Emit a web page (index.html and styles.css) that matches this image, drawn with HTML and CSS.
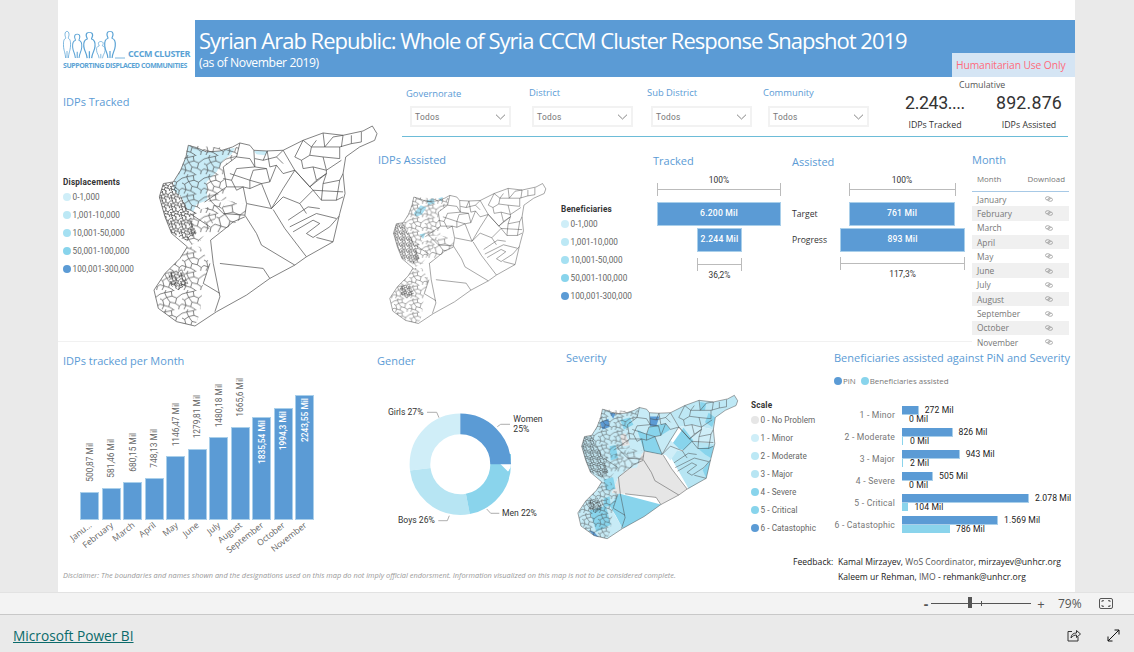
FILE: index.html
```html
<!DOCTYPE html>
<html lang="en">
<head>
<meta charset="utf-8">
<title>Whole of Syria CCCM Cluster Response Snapshot 2019</title>
<link rel="stylesheet" href="styles.css">
</head>
<body>
<svg class="defs" width="0" height="0" aria-hidden="true">
  <defs>
    <pattern id="mesh-med" width="66" height="58" patternUnits="userSpaceOnUse">
      <path class="mesh" d="M0 12L14 8L20 22L8 30L0 26M14 8L18 0M20 22L36 18L34 4L44 0M36 18L50 24L66 12M50 24L46 40L58 48L66 42M46 40L30 36L20 22M30 36L26 50L12 46L8 30M12 46L6 58M26 50L40 58M58 48L56 58M34 4L14 8M0 42L12 46"/>
    </pattern>
    <pattern id="mesh-large" width="66" height="58" patternUnits="userSpaceOnUse" patternTransform="scale(1.5)">
      <path class="mesh thin" d="M0 12L14 8L20 22L8 30L0 26M14 8L18 0M20 22L36 18L34 4L44 0M36 18L50 24L66 12M50 24L46 40L58 48L66 42M46 40L30 36L20 22M30 36L26 50L12 46L8 30M12 46L6 58M26 50L40 58M58 48L56 58M34 4L14 8M0 42L12 46"/>
    </pattern>
    <pattern id="mesh-dense" width="30" height="26" patternUnits="userSpaceOnUse">
      <path class="mesh heavy" d="M0 5L7 3L10 11L3 14L0 12M7 3L8 0M10 11L18 8L17 1L21 0M18 8L25 11L30 5M25 11L23 18L29 21L30 19M23 18L15 16L10 11M15 16L13 23L6 21L3 14M6 21L3 26M13 23L20 26M29 21L28 26M0 19L6 21"/>
    </pattern>
    <symbol id="syria" viewBox="300 365 700 625" preserveAspectRatio="none">
      <path class="mesh-area med" d="M415 435L555 445L570 428L560 470L520 500L530 600L465 605L440 640L412 640L370 545L392 510Z"/>
      <path class="mesh-area dense" d="M340 550L370 545L420 640L440 700L410 722L365 700L345 650L328 590Z"/>
      <path class="mesh-area med" d="M420 640L530 600L482 680L450 722L412 740L410 722Z"/>
      <path class="mesh-area large" d="M530 600L590 612L585 650L520 690L482 720L450 722L482 680Z"/>
      <path class="mesh-area med" d="M312 870L345 820L390 775L412 740L450 740L480 790L460 850L450 940L435 978L380 965L325 925Z"/>
      <path class="mesh-area dense" d="M355 820L395 805L415 850L385 870L360 855Z"/>
      <path class="lines" d="M570 428L560 470L520 500L530 560L580 560L590 610L665 625L700 565L735 510M612 450L615 500L560 505M652 452L660 500L680 495L700 520L735 510M700 450L735 510L790 570L880 575M760 420L785 440L780 465L755 480L760 505L790 500L830 510L875 480M820 398L825 440L785 440M825 440L870 440L870 475M880 405L875 440M935 395L935 425L905 430M735 510L780 560L830 520L830 510M635 550L665 625M700 590L750 610L790 570M790 570L815 600L860 600L880 590M715 660L775 620L810 625M720 680L800 640L860 655M730 695L790 660L810 670L770 700L790 712L840 680L868 648M800 712L850 725M465 605L530 560M590 612L585 645L620 700L635 735L735 795M670 628L705 685L770 770M510 790L640 805L660 835M490 790L510 890L495 935M480 790L460 850M585 650L550 665L520 690L482 720L490 790M480 600L520 640L585 645M540 520L600 540L635 550M600 540L600 565M680 495L660 545L635 550M460 850L510 880M420 640L480 680"/>
      <path class="lines" d="M560 470L600 475L615 500M560 505L545 540L560 570L580 560M545 540L520 535M600 540L610 510L650 505L660 545M615 500L650 505M652 452L640 480L615 475M580 560L600 565L635 550M640 480L680 470L700 490M680 470L700 450M785 440L800 420M825 440L850 410L880 405M905 430L905 405M870 440L905 430M780 465L820 470L830 510M820 470L870 475M755 480L735 470L760 420M790 500L800 540L830 520M800 540L780 560M815 600L820 550L830 520M860 600L870 540L880 520M820 550L870 540M700 590L665 625M750 610L770 640"/>
      <path class="outline" d="M415 435L440 442L470 455L510 452L548 440L570 428L600 435L612 450L650 452L700 450L760 420L820 398L880 405L940 392L968 377L982 400L975 420L930 440L888 470L880 520L886 580L870 640L850 725L770 770L735 795L660 835L590 885L500 935L435 978L380 965L325 925L312 870L345 820L390 775L412 740L365 700L345 650L328 590L340 550L370 545L392 510L408 470Z"/>
    </symbol>
    <g id="person">
      <path d="M2.6 29C2.2 23 .8 22 .5 17C.2 12 1 10 2.6 9.4C2.9 8.4 2 7.4 2 5.4C2 3.4 2.9 2.4 4 2.4C5.1 2.4 6 3.4 6 5.4C6 7.4 5.1 8.4 5.4 9.4C7 10 7.8 12 7.5 17C7.2 22 5.8 23 5.4 29M4 29V22"/>
    </g>
    <symbol id="link" viewBox="0 0 10 7">
      <ellipse cx="3.5" cy="2.7" rx="3" ry="2.1"/>
      <ellipse cx="6.5" cy="4.3" rx="3" ry="2.1"/>
    </symbol>
    <symbol id="chev" viewBox="0 0 11 6"><path d="M1 .7L5.5 5L10 .7"/></symbol>
  </defs>
</svg>

<main class="stage">
  <div class="canvas">
    <header class="header">
      <div class="logo">
        <svg class="logo-art" width="64" height="32" viewBox="0 0 64 32">
          <use href="#person"/>
          <use href="#person" transform="translate(9 3) scale(1.3 .9)"/>
          <use href="#person" transform="translate(20 1) scale(1.6 .97)"/>
          <use href="#person" transform="translate(33 11) scale(1.2 .63)"/>
          <use href="#person" transform="translate(41 0) scale(1.5 1)"/>
          <path d="M52 29H62"/>
        </svg>
        <span class="logo-name">CCCM CLUSTER</span>
        <span class="logo-tag">SUPPORTING DISPLACED COMMUNITIES</span>
      </div>
      <div class="banner">
        <h1>Syrian Arab Republic: Whole of Syria CCCM Cluster Response Snapshot 2019</h1>
        <p>(as of November 2019)</p>
        <span class="stamp">Humanitarian Use Only</span>
      </div>
    </header>

    <section class="upper">
      <div class="col-tracked">
        <h2 class="title t-tracked">IDPs Tracked</h2>
        <div class="map-row">
          <div class="legend l-disp">
            <h3>Displacements</h3>
            <div class="item"><i class="c1"></i>0-1,000</div>
            <div class="item"><i class="c2"></i>1,001-10,000</div>
            <div class="item"><i class="c3"></i>10,001-50,000</div>
            <div class="item"><i class="c4"></i>50,001-100,000</div>
            <div class="item"><i class="c5"></i>100,001-300,000</div>
          </div>
          <svg class="map map-a" viewBox="300 365 700 625">
            <path class="f1" d="M415 435L440 442L470 455L510 452L555 442L545 462L520 480L500 515L470 545L472 600L440 612L430 635L412 628L395 590L370 570L372 545L392 510L408 470Z"/>
            <path class="f1" d="M612 452L655 452L645 465L620 462Z"/>
            <use href="#syria" x="300" y="365" width="700" height="625"/>
          </svg>
        </div>
      </div>
      <div class="col-rest">
        <div class="filters">
          <div class="filter f-a"><label>Governorate</label><div class="select">Todos<svg class="chev"><use href="#chev"/></svg></div></div>
          <div class="filter f-b"><label>District</label><div class="select">Todos<svg class="chev"><use href="#chev"/></svg></div></div>
          <div class="filter f-c"><label>Sub District</label><div class="select">Todos<svg class="chev"><use href="#chev"/></svg></div></div>
          <div class="filter f-d"><label>Community</label><div class="select">Todos<svg class="chev"><use href="#chev"/></svg></div></div>
          <div class="kpis">
            <div class="cumulative">Cumulative</div>
            <div class="kpi-row">
              <div class="kpi k-one"><strong>2.243....</strong><span>IDPs Tracked</span></div>
              <div class="kpi k-two"><strong>892.876</strong><span>IDPs Assisted</span></div>
            </div>
          </div>
        </div>
        <div class="details">
          <div class="col-assisted">
            <h2 class="title">IDPs Assisted</h2>
            <div class="map-row2">
              <svg class="map map-b" viewBox="300 365 700 625">
                <path class="f2" d="M415 505L445 470L470 480L450 510L425 520Z"/>
                <path class="f2" d="M470 450L500 440L505 462L478 470Z"/>
                <path class="f2" d="M520 440L540 435L535 455Z"/>
                <path class="f2" d="M440 595L465 590L455 615Z"/>
                <use href="#syria" x="300" y="365" width="700" height="625"/>
              </svg>
              <div class="legend l-ben">
                <h3>Beneficiaries</h3>
                <div class="item"><i class="c1"></i>0-1,000</div>
                <div class="item"><i class="c2"></i>1,001-10,000</div>
                <div class="item"><i class="c3"></i>10,001-50,000</div>
                <div class="item"><i class="c4"></i>50,001-100,000</div>
                <div class="item"><i class="c5"></i>100,001-300,000</div>
              </div>
            </div>
          </div>

          <div class="col-bullet b-tracked">
            <h2 class="title">Tracked</h2>
            <div class="pct">100%</div>
            <div class="range r-full"></div>
            <div class="bar-fill b-full">6.200 Mil</div>
            <div class="bar-fill b-part">2.244 Mil</div>
            <div class="range r-part"></div>
            <div class="pct pct-low p-part">36,2%</div>
          </div>

          <div class="col-bullet b-assisted">
            <h2 class="title">Assisted</h2>
            <div class="pct p-target">100%</div>
            <div class="range r-target"></div>
            <div class="bar-row row-first"><span class="row-label w-target">Target</span><div class="bar-fill b-target">761 Mil</div></div>
            <div class="bar-row"><span class="row-label w-progress">Progress</span><div class="bar-fill b-progress">893 Mil</div></div>
            <div class="range r-progress"></div>
            <div class="pct pct-low p-progress">117,3%</div>
          </div>

          <div class="col-month">
            <h2 class="title">Month</h2>
            <div class="m-head"><span>Month</span><span>Download</span></div>
            <div class="m-row"><span>January</span><svg class="lnk"><use href="#link"/></svg></div>
            <div class="m-row"><span>February</span><svg class="lnk"><use href="#link"/></svg></div>
            <div class="m-row"><span>March</span><svg class="lnk"><use href="#link"/></svg></div>
            <div class="m-row"><span>April</span><svg class="lnk"><use href="#link"/></svg></div>
            <div class="m-row"><span>May</span><svg class="lnk"><use href="#link"/></svg></div>
            <div class="m-row"><span>June</span><svg class="lnk"><use href="#link"/></svg></div>
            <div class="m-row"><span>July</span><svg class="lnk"><use href="#link"/></svg></div>
            <div class="m-row"><span>August</span><svg class="lnk"><use href="#link"/></svg></div>
            <div class="m-row"><span>September</span><svg class="lnk"><use href="#link"/></svg></div>
            <div class="m-row"><span>October</span><svg class="lnk"><use href="#link"/></svg></div>
            <div class="m-row"><span>November</span><svg class="lnk"><use href="#link"/></svg></div>
          </div>
        </div>
      </div>
    </section>

    <div class="separator"></div>

    <section class="lower">
      <div class="col-chart">
        <h2 class="title">IDPs tracked per Month</h2>
        <div class="plot">
          <div class="bar-col"><span class="v-label">500,87 Mil</span><div class="vbar" style="height:28px"></div></div>
          <div class="bar-col"><span class="v-label">581,46 Mil</span><div class="vbar" style="height:32.5px"></div></div>
          <div class="bar-col"><span class="v-label">680,15 Mil</span><div class="vbar" style="height:38px"></div></div>
          <div class="bar-col"><span class="v-label">748,13 Mil</span><div class="vbar" style="height:42px"></div></div>
          <div class="bar-col"><span class="v-label">1146,47 Mil</span><div class="vbar" style="height:64px"></div></div>
          <div class="bar-col"><span class="v-label">1279,81 Mil</span><div class="vbar" style="height:71.5px"></div></div>
          <div class="bar-col"><span class="v-label">1480,18 Mil</span><div class="vbar" style="height:83px"></div></div>
          <div class="bar-col"><span class="v-label">1665,6 Mil</span><div class="vbar" style="height:93px"></div></div>
          <div class="bar-col"><div class="vbar" style="height:103px"><span class="v-label in">1835,54 Mil</span></div></div>
          <div class="bar-col"><div class="vbar" style="height:112px"><span class="v-label in">1994,3 Mil</span></div></div>
          <div class="bar-col"><div class="vbar" style="height:125px"><span class="v-label in">2243,55 Mil</span></div></div>
        </div>
        <div class="ticks">
          <div class="tick"><span>Janu...</span></div>
          <div class="tick"><span>February</span></div>
          <div class="tick"><span>March</span></div>
          <div class="tick"><span>April</span></div>
          <div class="tick"><span>May</span></div>
          <div class="tick"><span>June</span></div>
          <div class="tick"><span>July</span></div>
          <div class="tick"><span>August</span></div>
          <div class="tick"><span>September</span></div>
          <div class="tick"><span>October</span></div>
          <div class="tick"><span>November</span></div>
        </div>
      </div>

      <div class="col-gender">
        <h2 class="title">Gender</h2>
        <svg class="donut" width="189" height="145" viewBox="0 0 189 145">
          <g transform="rotate(-90 83.3 74.3)" fill="none" stroke-width="20.7">
            <circle class="s-girls" cx="83.3" cy="74.3" r="40.35" pathLength="100" stroke-dasharray="27 73" stroke-dashoffset="-73"/>
            <circle class="s-boys" cx="83.3" cy="74.3" r="40.35" pathLength="100" stroke-dasharray="26 74" stroke-dashoffset="-47"/>
            <circle class="s-men" cx="83.3" cy="74.3" r="40.35" pathLength="100" stroke-dasharray="22 78" stroke-dashoffset="-25"/>
            <circle class="s-women" cx="83.3" cy="74.3" r="40.35" pathLength="100" stroke-dasharray="25 75"/>
          </g>
          <path class="leader" d="M50 22.3H59.7L62 27.7M120.3 36.7L123.7 34.3H133M109.7 119L113.7 123.3H122.3M61.3 130.7H70.3L72.3 125.7"/>
          <text class="d-label" x="11" y="25">Girls 27%</text>
          <text class="d-label" x="136.3" y="32">Women</text>
          <text class="d-label" x="136.3" y="42">25%</text>
          <text class="d-label" x="125" y="126">Men 22%</text>
          <text class="d-label" x="21" y="133">Boys 26%</text>
        </svg>
      </div>

      <div class="col-severity">
        <h2 class="title">Severity</h2>
        <div class="map-row3">
          <svg class="map map-c" viewBox="300 365 700 625">
            <path class="f-base" d="M415 435L440 442L470 455L510 452L548 440L570 428L600 435L612 450L650 452L700 450L735 510L665 625L590 612L550 660L482 720L455 786L485 789L445 840L500 935L435 978L380 965L325 925L312 870L345 820L390 775L412 740L365 700L345 650L328 590L340 550L370 545L392 510L408 470Z"/>
            <path class="f-e" d="M700 450L760 420L820 398L880 405L940 392L968 377L982 400L975 420L930 440L888 470L880 520L830 510L790 500L735 510Z"/>
            <path class="f-m" d="M735 510L790 500L830 510L880 520L886 580L790 570Z"/>
            <path class="f-d" d="M681 600L750 610L790 570L886 580L870 640L850 725L776 769Z"/>
            <path class="f-c" d="M722 560L755 513L796 566L755 606L695 599Z"/>
            <path class="f-c" d="M815 600L880 590L870 640L845 625Z"/>
            <path class="f-c" d="M835 690L868 648L850 725Z"/>
            <path class="f-c" d="M860 450L888 470L875 510L845 490Z"/>
            <path class="f-c" d="M825 405L850 410L845 440L825 440Z"/>
            <path class="f-c" d="M560 520L600 540L635 550L665 625L590 612Z"/>
            <path class="f-c" d="M615 505L680 495L700 520L660 545L635 550L600 540Z"/>
            <path class="f-m" d="M665 625L700 565L735 600L700 650L681 628Z"/>
            <path class="f-x" d="M614 466L654 466L641 506L614 506Z"/>
            <path class="f-g" d="M485 789L510 790L640 805L660 835L735 795L770 770L705 685L670 628L590 612L550 660L482 720L455 786Z"/>
            <path class="f-c" d="M485 789L660 835L590 885L500 935L470 880L445 840Z"/>
            <path class="f-g" d="M490 545L510 535L530 585L500 590Z"/>
            <path class="f-c" d="M445 590L470 585L480 640L450 650Z"/>
            <path class="f-m" d="M480 640L580 620L560 680L490 690Z"/>
            <path class="f-c" d="M420 730L460 720L470 770L430 775Z"/>
            <path class="f-c" d="M360 860L430 840L450 920L390 950Z"/>
            <path class="f-x" d="M405 490L440 475L445 510L415 520Z"/>
            <path class="f-x" d="M445 450L470 452L460 475Z"/>
            <path class="f-x" d="M358 942L380 950L400 972L378 965Z"/>
            <path class="f-c" d="M490 480L530 470L545 500L505 520Z"/>
            <path class="f-c" d="M420 810L445 800L450 840L420 845Z"/>
            <use href="#syria" x="300" y="365" width="700" height="625"/>
          </svg>
          <div class="legend l-scale">
            <h3>Scale</h3>
            <div class="item"><i class="c0"></i>0 - No Problem</div>
            <div class="item"><i class="c1"></i>1 - Minor</div>
            <div class="item"><i class="c2"></i>2 - Moderate</div>
            <div class="item"><i class="c2b"></i>3 - Major</div>
            <div class="item"><i class="c4"></i>4 - Severe</div>
            <div class="item"><i class="c4"></i>5 - Critical</div>
            <div class="item"><i class="c5"></i>6 - Catastophic</div>
          </div>
        </div>
      </div>

      <div class="col-benef">
        <h2 class="title">Beneficiaries assisted against PiN and Severity</h2>
        <div class="b-legend">
          <i class="c5"></i><span>PiN</span><i class="c4"></i><span>Beneficiaries assisted</span>
        </div>
        <div class="b-rows">
          <div class="b-row"><span class="cat">1 - Minor</span><div class="pair"><div class="hb"><b class="pin" style="width:16.7px"></b><em>272 Mil</em></div><div class="hb"><b class="ass" style="width:0"></b><em class="zero">0 Mil</em></div></div></div>
          <div class="b-row"><span class="cat">2 - Moderate</span><div class="pair"><div class="hb"><b class="pin" style="width:50.5px"></b><em>826 Mil</em></div><div class="hb"><b class="ass" style="width:1px"></b><em class="zero">0 Mil</em></div></div></div>
          <div class="b-row"><span class="cat">3 - Major</span><div class="pair"><div class="hb"><b class="pin" style="width:57.7px"></b><em>943 Mil</em></div><div class="hb"><b class="ass" style="width:1px"></b><em class="zero">2 Mil</em></div></div></div>
          <div class="b-row"><span class="cat">4 - Severe</span><div class="pair"><div class="hb"><b class="pin" style="width:31px"></b><em>505 Mil</em></div><div class="hb"><b class="ass" style="width:0"></b><em class="zero">0 Mil</em></div></div></div>
          <div class="b-row"><span class="cat">5 - Critical</span><div class="pair"><div class="hb"><b class="pin" style="width:127px"></b><em>2.078 Mil</em></div><div class="hb"><b class="ass" style="width:6.4px"></b><em>104 Mil</em></div></div></div>
          <div class="b-row"><span class="cat">6 - Catastophic</span><div class="pair"><div class="hb"><b class="pin" style="width:96px"></b><em>1.569 Mil</em></div><div class="hb"><b class="ass" style="width:48px"></b><em>786 Mil</em></div></div></div>
        </div>
      </div>
    </section>

    <footer class="foot">
      <p class="disclaimer">Disclaimer: The boundaries and names shown and the designations used on this map do not imply official endorsment. Information visualized on this map is not to be considered complete.</p>
      <div class="feedback">
        <span>Feedback:</span><span><b>Kamal Mirzayev</b>, <u>WoS Coordinator</u>, mirzayev@unhcr.org</span>
        <span></span><span><b>Kaleem ur Rehman</b>, <u>IMO</u> - rehmank@unhcr.org</span>
      </div>
    </footer>
  </div>
</main>

<div class="zoombar">
  <span class="minus">-</span>
  <div class="slider"><i class="thumb"></i><i class="mark"></i></div>
  <span class="plus">+</span>
  <span class="percent">79%</span>
  <svg class="fit" width="14" height="11" viewBox="0 0 14 11"><rect x=".5" y=".5" width="13" height="10" rx="1.5"/><path d="M3 4V2.7H5M9 2.7H11V4M11 7V8.3H9M5 8.3H3V7"/></svg>
</div>

<div class="pbi">
  <a class="pbi-link" href="#">Microsoft Power BI</a>
  <svg class="share" width="14" height="13" viewBox="0 0 14 13"><path d="M5 2.5H1V12H11V8M4 9C4 5.5 6.5 4 9.5 4V1.5L13.5 5L9.5 8.5V6C7.5 6 5.5 6.8 4 9Z"/></svg>
  <svg class="expand" width="13" height="13" viewBox="0 0 13 13"><path d="M1 12L12 1M7.5 1H12V5.5M1 7.5V12H5.5"/></svg>
</div>
</body>
</html>
```

FILE: styles.css
```css
* { box-sizing: border-box; }
html, body { margin: 0; padding: 0; }
body {
  width: 1134px; height: 652px; overflow: hidden;
  background: #eaeaea;
  font-family: "Open Sans", "Noto Sans", sans-serif;
  color: #666;
}
.defs { display: block; height: 0; }
h1, h2, h3, p { margin: 0; font-weight: 400; }

.stage { height: 592px; padding-left: 58px; }
.canvas { width: 1017px; height: 592px; background: #fff; }

/* header */
.header { display: flex; height: 78px; padding: 20px 0 0 4px; }
.logo { width: 133px; height: 57px; position: relative; color: #5ba3d5; flex: none; }
.logo-art { display: block; margin: 9px 0 0 1px; fill: none; stroke: #5ba3d5; stroke-width: .8; }
.logo-name, .logo-tag { position: absolute; white-space: nowrap; font-weight: 700; font-family: "Open Sans", sans-serif; }
.logo-name { left: 66px; top: 28px; font-size: 9px; line-height: 12px; letter-spacing: -.4px; }
.logo-tag { left: 1px; top: 41px; font-size: 7px; line-height: 10px; letter-spacing: -.43px; }
.banner { position: relative; flex: 1; height: 57px; background: #5b9bd5; color: #fff; padding: 5px 0 0 4px; }
.banner h1 { font-size: 22px; line-height: 30px; letter-spacing: -.98px; white-space: nowrap; }
.banner p { font-size: 12.2px; line-height: 16px; margin-top: 0; letter-spacing: -.42px; }
.stamp {
  position: absolute; right: 0; bottom: 0; width: 123px; height: 24px;
  background: #d5e5f4; color: #ff6b7c; font-size: 10.3px; line-height: 25px; letter-spacing: -.12px;
  padding-left: 4px; white-space: nowrap;
}

/* shared */
.title { font-size: 11px; line-height: 16px; color: #5b9bd5; white-space: nowrap; }
.legend { font-family: Roboto, sans-serif; font-size: 8.2px; letter-spacing: .05px; color: #666; }
.legend h3 { font-size: 8.2px; line-height: 12px; font-weight: 700; color: #333; letter-spacing: .2px; }
.item { display: flex; align-items: center; height: 18px; white-space: nowrap; }
.item i { width: 8px; height: 8px; border-radius: 50%; margin-right: 1.5px; flex: none; }
.c0 { background: #e6e6e6; } .c1 { background: #cfeef8; } .c2 { background: #bce8f5; }
.c2b { background: #b7e5f3; } .c3 { background: #a5e0f2; } .c4 { background: #88d4ec; } .c5 { background: #5b9bd5; }
.map { display: block; flex: none; }
.mesh { fill: none; stroke: #444; stroke-width: 2; }
.mesh.thin { stroke-width: 1.4; }
.mesh.heavy { stroke: #333; stroke-width: 2.2; }
.mesh-area { stroke: none; }
.mesh-area.med { fill: url(#mesh-med); }
.mesh-area.large { fill: url(#mesh-large); }
.mesh-area.dense { fill: url(#mesh-dense); }
.lines { fill: none; stroke: #444; stroke-width: 2; }
.outline { fill: none; stroke: #555; stroke-width: 2.2; }
.f1 { fill: #c9ecf7; } .f2 { fill: #a9e0f2; }
.f-base { fill: #c7ebf6; } .f-e { fill: #bee8f5; } .f-m { fill: #cfeef8; } .f-d { fill: #b7e5f3; }
.f-c { fill: #88d4ec; } .f-x { fill: #5b9bd5; } .f-g { fill: #e6e6e6; }

/* upper */
.upper { display: flex; height: 263px; }
.col-tracked { width: 320px; flex: none; }
.t-tracked { margin: 16px 0 0 5px; }
.map-row { display: flex; margin-top: 12px; padding-left: 5px; }
.l-disp { width: 87px; flex: none; margin-top: 54px; }
.map-a { width: 233px; height: 208px; margin-left: 0; }
.col-rest { flex: 1; min-width: 0; }
.filters { display: flex; height: 59px; margin: 0 7px 0 24px; border-bottom: 1px solid #6dbcd8; padding-left: 4px; }
.filter { padding-top: 8px; font-size: 9.4px; flex: none; }
.filter label { display: block; line-height: 13px; color: #5b9bd5; white-space: nowrap; }
.f-a { width: 123px; padding-top: 9px; } .f-b { width: 118px; } .f-c { width: 116px; } .f-d { width: 132px; }
.select {
  display: flex; align-items: center; justify-content: space-between;
  width: 101px; height: 21px; margin: 7px 0 0 3px; padding: 1px 3px 0 3px;
  border: 2px solid #f2f2f2; font-family: Roboto, sans-serif; font-size: 8.4px; letter-spacing: .3px; color: #777;
}
.f-a .select { margin: 6px 0 0 4px; }
.f-c .select { margin-left: 4px; }
.f-d .select { margin-left: 5px; }
.chev { width: 11px; height: 6px; fill: none; stroke: #777; stroke-width: .9; }
.kpis { flex: 1; padding-top: 1px; min-width: 0; }
.cumulative { font-size: 8.8px; line-height: 12px; color: #555; padding-left: 64px; }
.kpi-row { display: flex; }
.kpi { display: flex; flex-direction: column; align-items: center; flex: none; }
.k-one { width: 80px; }
.k-two { width: 78px; margin-left: 15px; }
.kpi strong { font-family: Roboto, sans-serif; font-weight: 400; font-size: 17.8px; line-height: 24px; letter-spacing: .2px; color: #333; white-space: nowrap; }
.k-one strong { letter-spacing: -.4px; }
.kpi span { font-size: 8.8px; line-height: 14px; margin-top: 3px; color: #333; white-space: nowrap; }

.details { display: flex; height: 204px; }
.col-assisted { width: 274px; flex: none; padding-top: 15px; }
.map-row2 { display: flex; margin: 12px 0 0 9px; }
.map-b { width: 163px; height: 147px; }
.l-ben { margin: 23px 0 0 11px; }

.col-bullet { flex: none; display: flex; flex-direction: column; font-family: Roboto, sans-serif; }
.b-tracked { width: 139px; padding-top: 16px; }
.b-assisted { width: 181px; padding-top: 17px; }
.col-bullet .title { padding-left: 1px; font-family: "Open Sans", sans-serif; }
.pct { font-size: 8.4px; line-height: 12px; color: #333; text-align: center; margin-top: 5px; width: 134px; }
.b-assisted .pct { margin-top: 4px; }
.p-target { margin-left: 58px; width: 106px; }
.range { height: 13px; margin-top: -3px; border-left: 1px solid #bbb; border-right: 1px solid #bbb; }
.range::after { content: ""; display: block; height: 1px; margin-top: 6px; background: #bbb; }
.r-full { margin-left: 5px; width: 124px; }
.range.r-part { margin: 6px 0 0 45px; width: 45px; }
.r-target { margin-left: 58px; width: 107px; }
.range.r-progress { margin: 5px 0 0 49px; width: 125px; }
.bar-fill {
  height: 24px; background: #5b9bd5; border: 1px solid #a9cfea; color: #fff;
  font-size: 8.6px; font-weight: 500; line-height: 20px; text-align: center; letter-spacing: .2px;
}
.b-full { margin: 6px 0 0 5px; width: 124px; }
.b-part { margin: 2px 0 0 45px; width: 45px; }
.b-target { width: 106px; }
.b-progress { width: 125px; }
.bar-row { display: flex; margin-top: 2px; padding-left: 1px; font-family: "Open Sans", sans-serif; }
.bar-row.row-first { margin-top: 6px; }
.bar-row .bar-fill { font-family: Roboto, sans-serif; }
.row-label { font-size: 8.6px; line-height: 24px; color: #333; flex: none; }
.w-target { width: 57px; } .w-progress { width: 48px; }
.col-bullet .pct-low { margin-top: -2px; }
.p-part { width: 135px; }
.p-progress { margin-left: 49px; width: 125px; }
.col-month { width: 97px; flex: none; padding-top: 15px; font-size: 8.4px; }
.m-head { display: flex; justify-content: space-between; height: 24px; padding: 4px 4px 0 5px; line-height: 14px; font-size: 7.9px; color: #777; border-bottom: 1px solid #a7c9e6; }
.m-row { display: flex; align-items: center; height: 14.3px; padding-left: 5px; color: #777; white-space: nowrap; }
.m-row:nth-of-type(odd) { background: #f0f0f0; }
.m-row span { width: 68px; flex: none; }
.lnk { width: 8px; height: 6px; fill: none; stroke: #888; stroke-width: .8; }

.separator { width: 914px; height: 1px; background: #f1f1f1; }

/* lower */
.lower { display: flex; height: 213px; }
.col-chart { width: 319px; flex: none; padding-top: 11px; }
.col-chart .title { padding-left: 5px; }
.plot { display: flex; align-items: flex-end; height: 151px; padding-left: 21px; }
.bar-col { width: 21.5px; display: flex; flex-direction: column; align-items: center; }
.vbar { width: 19px; background: #5b9bd5; border: 1px solid #a9cfea; display: flex; flex-direction: column; align-items: center; padding-top: 2px; }
.v-label {
  writing-mode: vertical-rl; transform: rotate(180deg);
  font-family: Roboto, sans-serif; font-size: 8.4px; line-height: 10px; color: #666; white-space: nowrap; margin-bottom: 10px;
}
.v-label.in { color: #fff; font-weight: 500; margin: 0; }
.ticks { display: flex; padding-left: 21px; height: 0; }
.tick { width: 21.5px; flex: none; display: flex; justify-content: flex-end; padding-right: 13px; padding-top: 0; }
.tick span { transform: rotate(-38deg); transform-origin: right center; font-size: 8.6px; line-height: 10px; color: #666; white-space: nowrap; flex: none; }

.col-gender { width: 189px; flex: none; padding-top: 11px; }
.donut { display: block; margin-top: 21px; }
.s-women { stroke: #5b9bd5; } .s-men { stroke: #8ad4ec; } .s-boys { stroke: #b7e5f3; } .s-girls { stroke: #d0eef8; }
.leader { fill: none; stroke: #999; stroke-width: .8; }
.d-label { font-family: Roboto, sans-serif; font-size: 8.6px; fill: #333; }

.col-severity { width: 268px; flex: none; padding-top: 8px; }
.map-row3 { display: flex; margin: 26px 0 0 9px; }
.map-c { width: 167px; height: 150px; }
.l-scale { margin: 7px 0 0 9px; }

.col-benef { flex: 1; padding-top: 8px; min-width: 0; }
.b-legend { display: flex; align-items: center; margin-top: 9px; font-size: 7.9px; line-height: 12px; color: #777; white-space: nowrap; }
.b-legend i { width: 8px; height: 8px; border-radius: 50%; margin-right: 1px; flex: none; }
.b-legend span { margin-right: 5px; }
.b-rows { margin-top: 19px; font-family: Roboto, sans-serif; }
.b-row { display: flex; height: 22px; }
.cat { width: 61px; flex: none; font-size: 8.6px; line-height: 18px; letter-spacing: .2px; color: #777; white-space: nowrap; display: flex; justify-content: flex-end; }
.pair { margin-left: 7px; }
.hb { display: flex; align-items: center; height: 8.7px; white-space: nowrap; }
.hb b { display: block; height: 8.7px; flex: none; }
.hb b.pin { background: #5b9bd5; border: 0 solid #a9cfea; border-width: 0 1px 1px 0; }
.hb b.ass { background: #8ad4ec; }
.hb em { font-style: normal; font-size: 8.6px; font-weight: 400; color: #222; margin-left: 6px; letter-spacing: .1px; }
.hb em.zero { margin-left: 7px; }

.foot { display: flex; height: 37px; }
.disclaimer { width: 735px; flex: none; padding: 14px 0 0 5px; font-size: 7.4px; line-height: 12px; font-style: italic; color: #999; white-space: nowrap; }
.feedback { display: grid; grid-template-columns: 45px auto; grid-auto-rows: 15px; font-size: 8.6px; line-height: 15px; color: #222; white-space: nowrap; }
.feedback b { font-weight: 400; color: #222; }
.feedback u { text-decoration: none; color: #555; }

/* zoom bar */
.zoombar { display: flex; align-items: center; height: 23px; background: #f3f3f3; border-top: 1px solid #e2e2e2; border-bottom: 1px solid #c8c8c8; padding-left: 921px; color: #555; }
.minus { width: 10px; font-size: 14px; font-weight: 700; line-height: 20px; text-align: center; }
.slider { width: 100px; height: 1px; background: #555; position: relative; flex: none; }
.thumb { position: absolute; left: 37px; top: -6px; width: 4px; height: 11px; background: #555; }
.mark { position: absolute; left: 50px; top: -2px; width: 1px; height: 5px; background: #555; }
.plus { width: 20px; font-size: 13px; line-height: 20px; text-align: center; }
.percent { margin-left: 7px; width: 41px; font-size: 12px; }
.fit { fill: none; stroke: #555; stroke-width: 1; flex: none; }

/* bottom strip */
.pbi { display: flex; align-items: center; height: 37px; padding: 3px 14px 0 13px; }
.pbi-link { font-size: 13.7px; color: #0b6a6a; text-decoration: underline; white-space: nowrap; margin-right: auto; }
.share { fill: none; stroke: #333; stroke-width: 1; margin-right: 26px; }
.expand { fill: none; stroke: #111; stroke-width: 1; }
```
